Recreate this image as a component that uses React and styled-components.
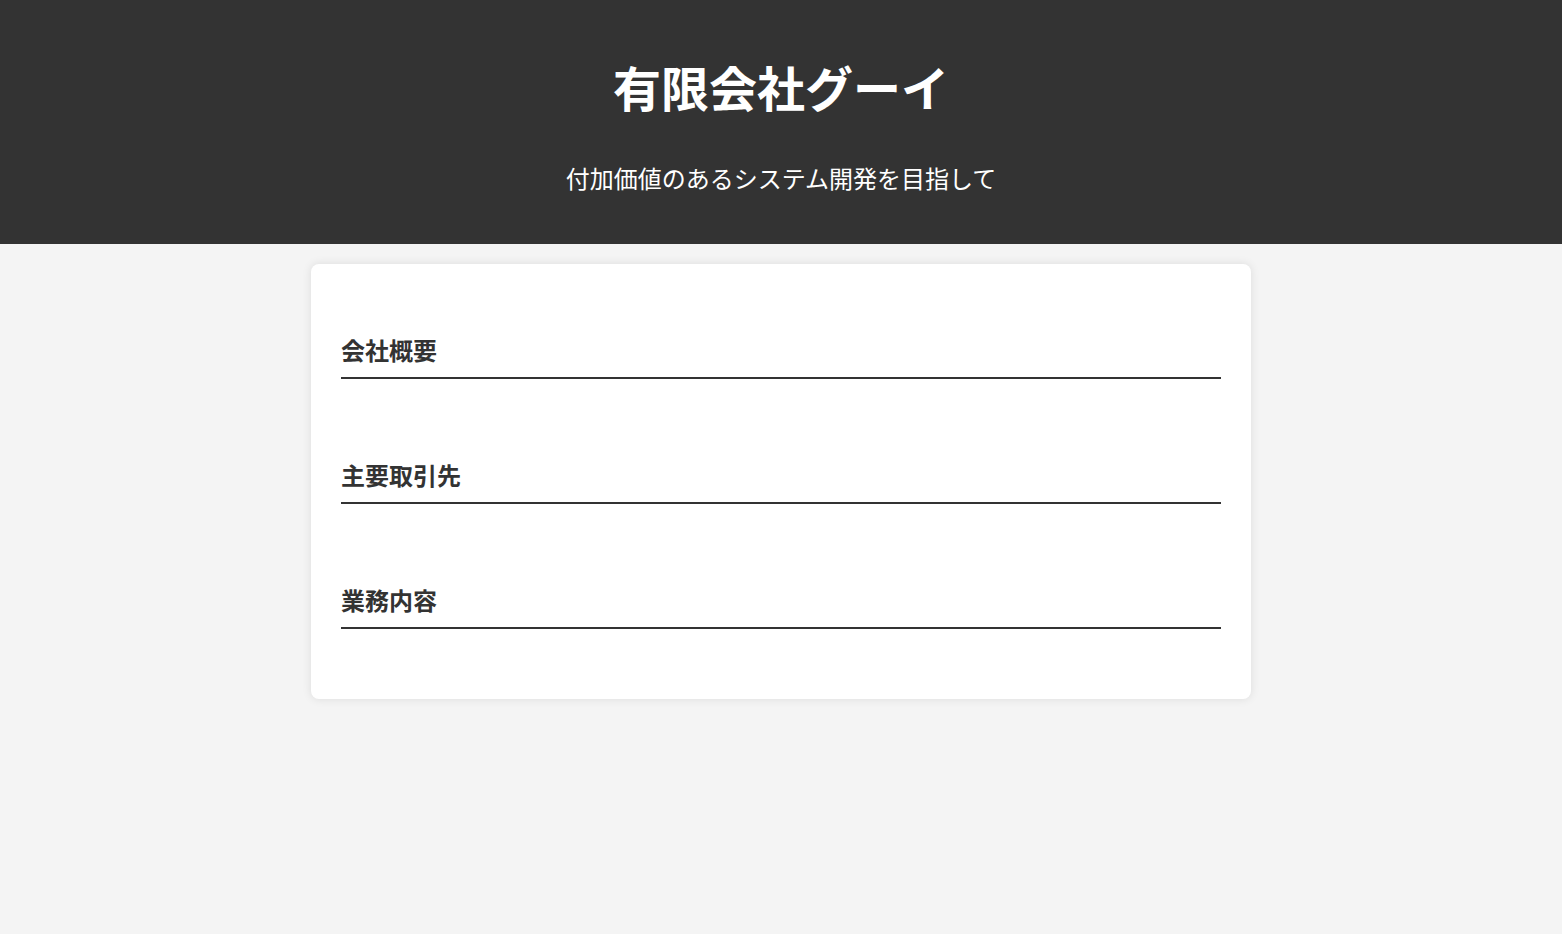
import React from 'react'
import styled, { createGlobalStyle } from 'styled-components'

const GlobalStyle = createGlobalStyle`
  * {
    box-sizing: border-box;
  }
  body {
    margin: 0;
    background: #f4f4f4;
    color: #333;
    font-family: "Noto Sans CJK JP", "Noto Sans", sans-serif;
  }
`

const Header = styled.header`
  background: #333;
  color: #fff;
  text-align: center;
  padding: 58px 20px 48.4px;
`

const Title = styled.h1`
  margin: 0;
  font-size: 48px;
  line-height: 1.2;
  font-weight: 700;
`

const Tagline = styled.p`
  margin: 44px 0 0;
  font-size: 24px;
  line-height: 1.5;
`

const Main = styled.main`
  width: 940px;
  margin: 20px auto;
  padding: 30px;
  background: #fff;
  border-radius: 8px;
  box-shadow: 0 0 10px rgba(0, 0, 0, 0.1);
`

const Section = styled.section`
  padding: 38px 0 40px;
`

const Heading = styled.h2`
  margin: 0;
  font-size: 24px;
  line-height: 1.5;
  font-weight: 700;
  color: #333;
  padding-bottom: 9px;
  border-bottom: 2px solid #333;
`

const sections = ['会社概要', '主要取引先', '業務内容']

export default function App() {
  return (
    <>
      <GlobalStyle />
      <Header>
        <Title>有限会社グーイ</Title>
        <Tagline>付加価値のあるシステム開発を目指して</Tagline>
      </Header>
      <Main>
        {sections.map((s) => (
          <Section key={s}>
            <Heading>{s}</Heading>
          </Section>
        ))}
      </Main>
    </>
  )
}
